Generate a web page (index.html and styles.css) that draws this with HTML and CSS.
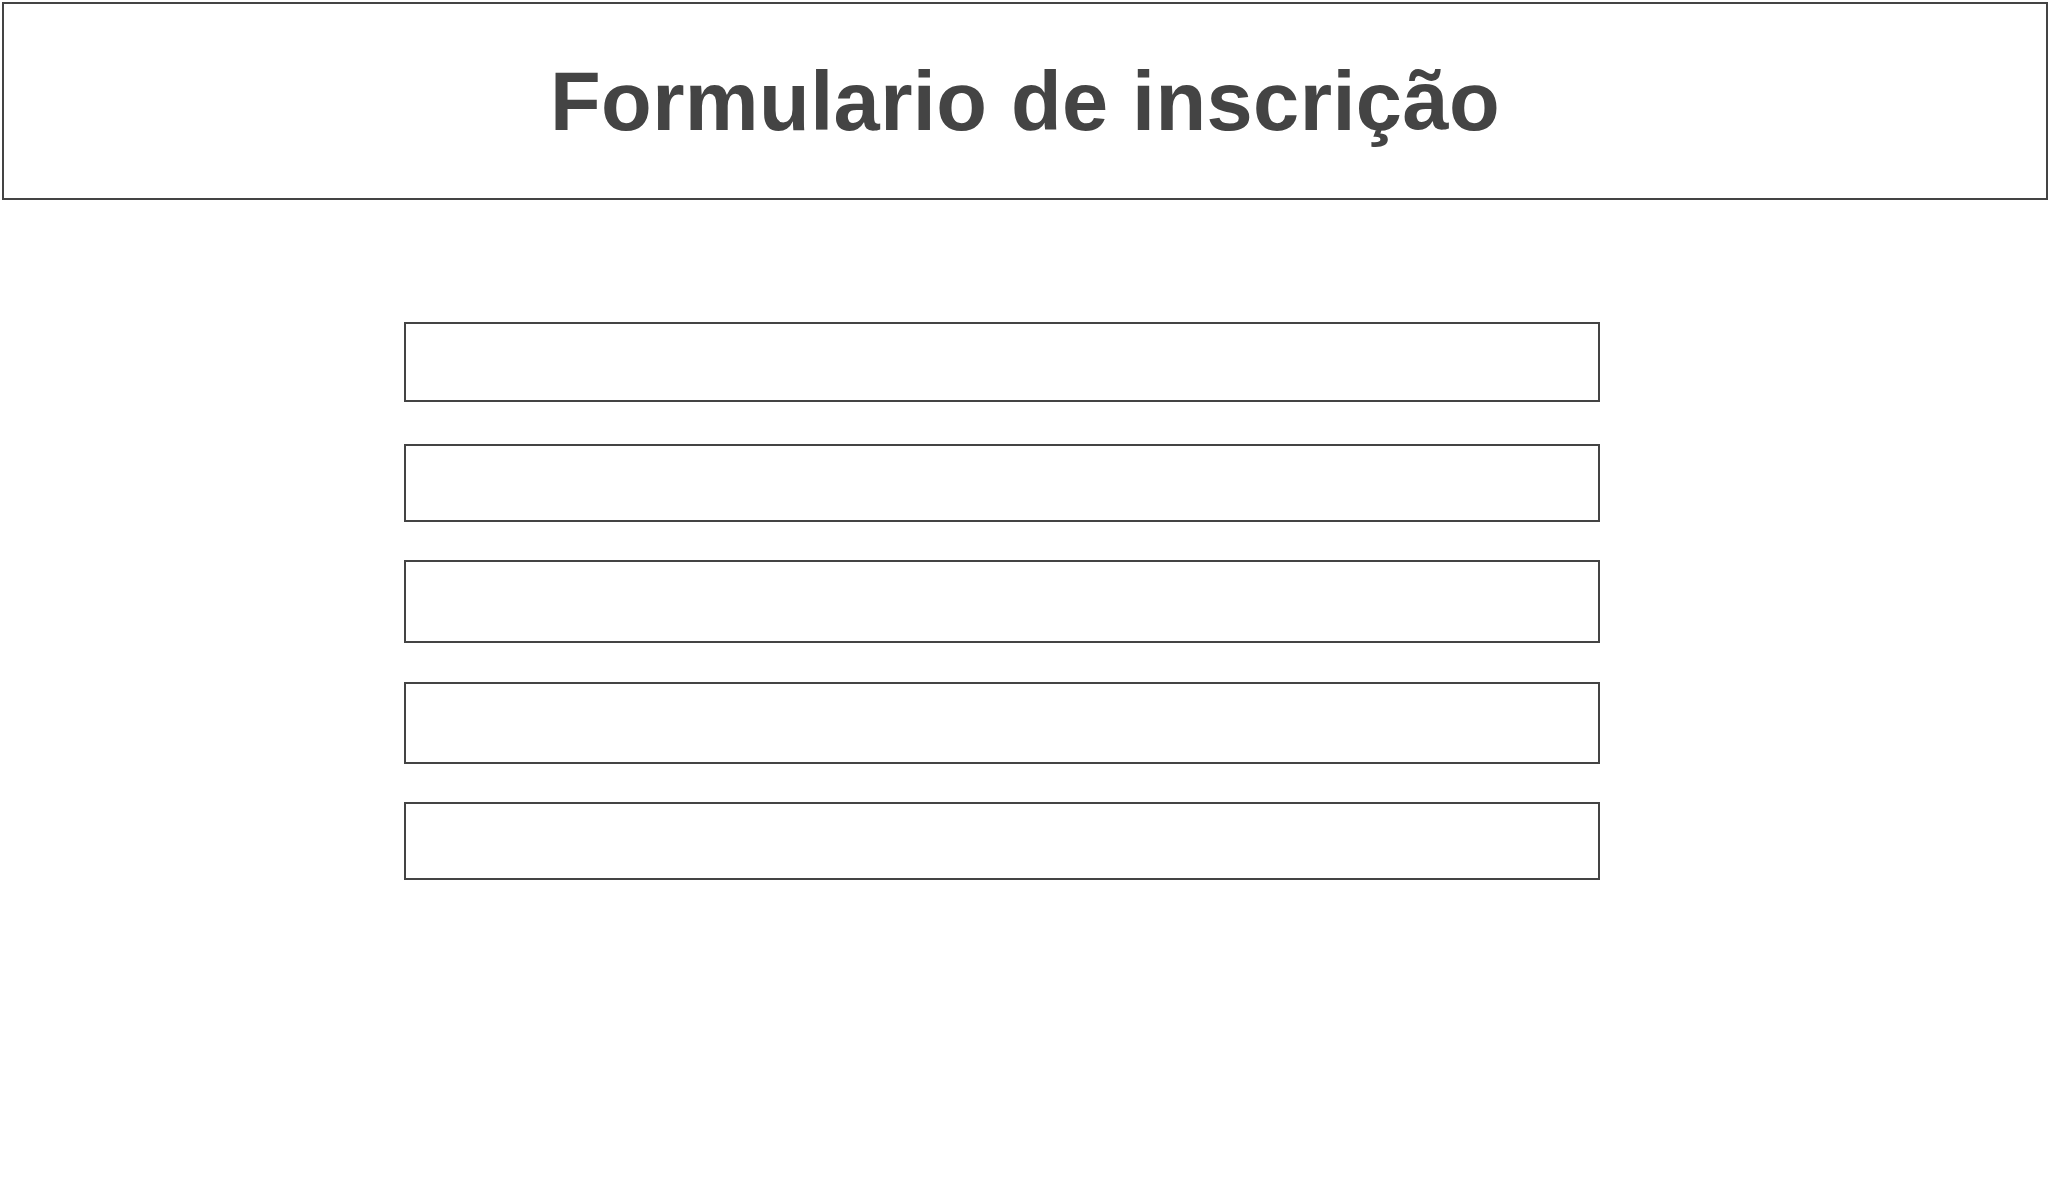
FILE: index.html
```html
<!DOCTYPE html>
<html lang="pt">
<head>
<meta charset="utf-8">
<title>Formulario de inscrição</title>
<link rel="stylesheet" href="styles.css">
</head>
<body>
  <header class="header">
    <h1 class="title">Formulario de inscrição</h1>
  </header>
  <main class="form">
    <div class="field field-1"></div>
    <div class="field field-2"></div>
    <div class="field field-3"></div>
    <div class="field field-4"></div>
    <div class="field field-5"></div>
  </main>
</body>
</html>
```

FILE: styles.css
```css
html, body {
  margin: 0;
  padding: 0;
  background: #ffffff;
}

body {
  padding: 2px 0 2px 2px;
  font-family: "Liberation Sans", Arial, sans-serif;
  color: #444444;
}

.header {
  box-sizing: border-box;
  height: 198px;
  border: 2px solid #444444;
  display: flex;
  align-items: center;
  justify-content: center;
}

.title {
  margin: 0;
  font-size: 83px;
  font-weight: bold;
  line-height: 1;
  color: #444444;
  letter-spacing: 0.4px;
}

.form {
  display: flex;
  flex-direction: column;
  margin-top: 122px;
  margin-left: 402px;
  width: 1196px;
}

.field {
  box-sizing: border-box;
  border: 2px solid #444444;
}

.field-1 { height: 80px; }
.field-2 { height: 78px; margin-top: 42px; }
.field-3 { height: 83px; margin-top: 38px; }
.field-4 { height: 82px; margin-top: 39px; }
.field-5 { height: 78px; margin-top: 38px; }
```
